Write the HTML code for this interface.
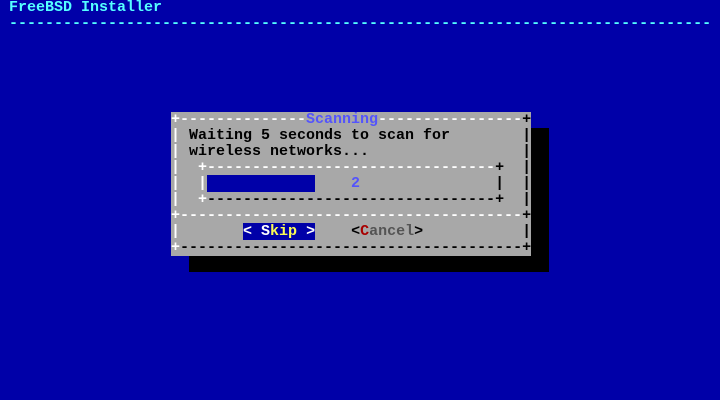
<!DOCTYPE html>
<html><head><meta charset="utf-8"><style>
html,body{margin:0;padding:0;}
body{width:720px;height:400px;background:#0000a8;position:relative;overflow:hidden;
font-family:"Liberation Mono",monospace;font-size:15px;font-weight:bold;}
.r{position:absolute;height:16px;line-height:16px;white-space:pre;}
.w{color:#fff}.k{color:#000}.c{color:#55ffff}.lb{color:#5454fc}
.y{color:#fcfc54}.red{color:#a80000}.g{color:#545454}
</style></head><body>
<div class="r c" style="left:9px;top:0">FreeBSD Installer</div>
<div class="r c" style="left:9px;top:16px">------------------------------------------------------------------------------</div>
<div style="position:absolute;left:189px;top:128px;width:360px;height:144px;background:#000"></div>
<div style="position:absolute;left:171px;top:112px;width:360px;height:144px;background:#a8a8a8"></div>
<div class="r" style="left:171px;top:112px"><span class="w">+--------------</span><span class="lb">Scanning</span><span class="w">----------------</span><span class="k">+</span></div>
<div class="r" style="left:171px;top:128px"><span class="w">|</span><span class="k"> Waiting 5 seconds to scan for        |</span></div>
<div class="r" style="left:171px;top:144px"><span class="w">|</span><span class="k"> wireless networks...                 |</span></div>
<div class="r" style="left:171px;top:160px"><span class="w">|  +--------------------------------</span><span class="k">+  |</span></div>
<div class="r" style="left:171px;top:176px"><span class="w">|  |</span><span style="background:#0000a8">            </span><span class="lb">    2</span><span class="k">               |  |</span></div>
<div class="r" style="left:171px;top:192px"><span class="w">|  +</span><span class="k">--------------------------------+  |</span></div>
<div class="r" style="left:171px;top:208px"><span class="w">+--------------------------------------</span><span class="k">+</span></div>
<div class="r" style="left:171px;top:224px"><span class="w">|</span>       <span style="background:#0000a8"><span class="w">&lt; S</span><span class="y">kip</span><span class="w"> &gt;</span></span>    <span class="k">&lt;</span><span class="red">C</span><span class="g">ancel</span><span class="k">&gt;</span><span class="k">           |</span></div>
<div class="r" style="left:171px;top:240px"><span class="w">+</span><span class="k">--------------------------------------+</span></div>
</body></html>
